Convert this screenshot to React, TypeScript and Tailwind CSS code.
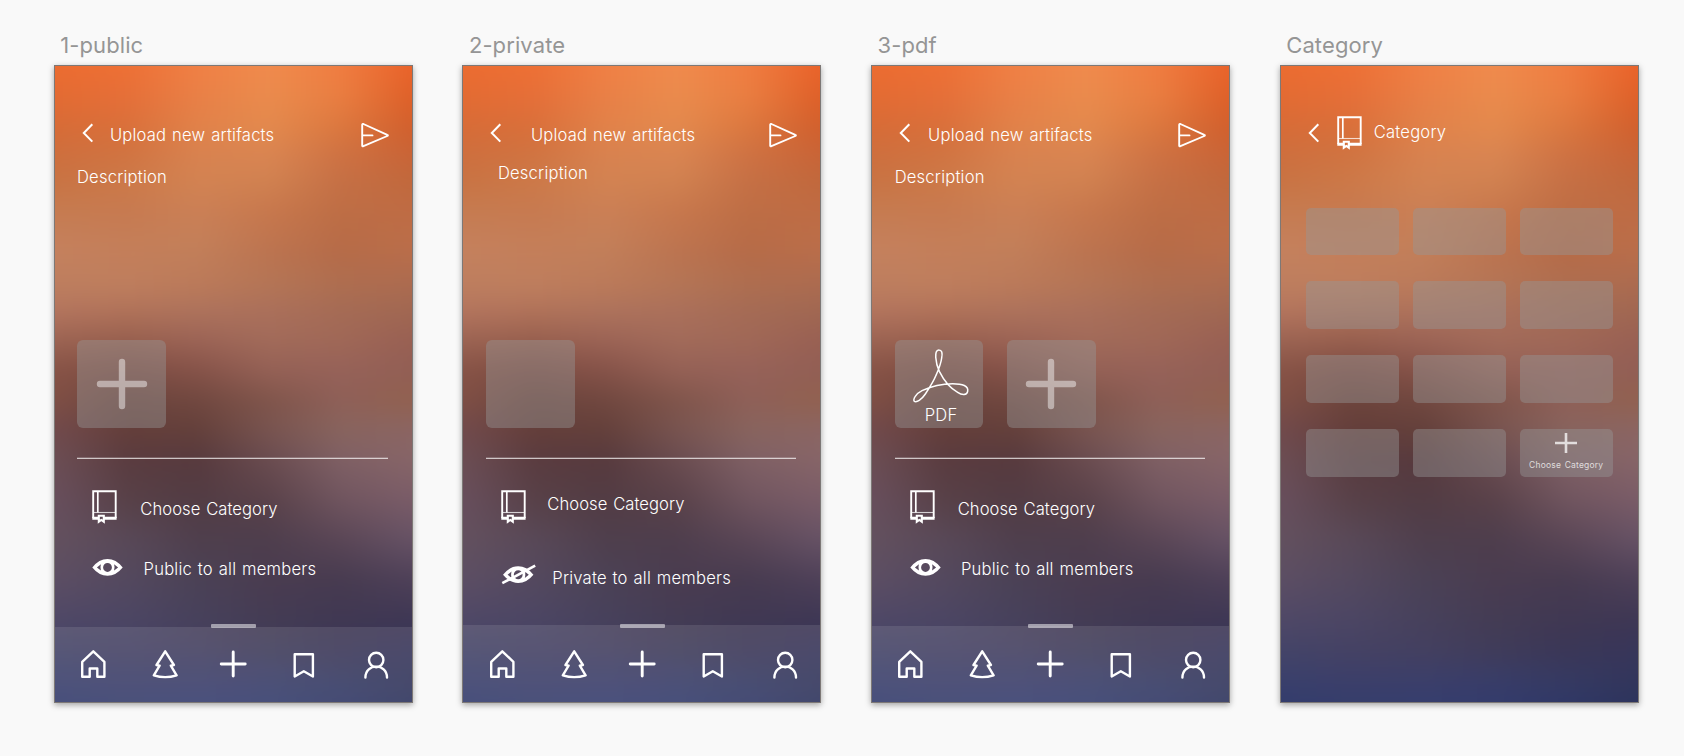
import type { CSSProperties, ReactNode } from "react";

/* Blurred wallpaper: every row is a horizontal colour ramp that fades into the one above it. */
const WALL: [number, string[]][] = [
  [0, ["#ec6c31", "#ee7035", "#f08045", "#f08b4d", "#f07d41", "#ea632a"]],
  [34, ["#e26b33", "#e46f39", "#e88047", "#e98b4d", "#e87d41", "#dd6029"]],
  [64, ["#d66c38", "#d8703b", "#e0824a", "#e2894e", "#da773f", "#d0602e"]],
  [89, ["#ce6f3e", "#d07442", "#d88250", "#d98552", "#ce7243", "#c96437"]],
  [114, ["#c97343", "#cd7948", "#d38352", "#d18251", "#c67045", "#c1683c"]],
  [144, ["#c67b50", "#c77a50", "#cb8056", "#c8784d", "#be6e45", "#bf6c44"]],
  [184, ["#c5815e", "#c47f5a", "#c27f5a", "#bc7450", "#b66b48", "#ba6e4a"]],
  [219, ["#bd7e5f", "#be7e5e", "#bb7a5a", "#b47556", "#ae6e50", "#ac6b50"]],
  [244, ["#b4755e", "#b1735a", "#ae735c", "#ab705b", "#a56b55", "#a16852"]],
  [274, ["#9c6453", "#98604f", "#9c6456", "#a26b5a", "#a06857", "#996053"]],
  [304, ["#875346", "#7e4c43", "#865349", "#956156", "#966259", "#925f55"]],
  [334, ["#7f4f45", "#6c443c", "#714840", "#80554b", "#8f6058", "#92614f"]],
  [364, ["#714a4c", "#643e3a", "#64403b", "#785450", "#88645e", "#8b6563"]],
  [394, ["#6c4e54", "#5a3c40", "#573a3e", "#6a4c50", "#7f6065", "#876568"]],
  [434, ["#684f5d", "#584148", "#523c44", "#5a424a", "#70555f", "#7a5c68"]],
  [474, ["#63515f", "#594958", "#4f3f4d", "#4e3e4d", "#5a4656", "#665265"]],
  [514, ["#5c4e64", "#54495f", "#4b4256", "#4a3c50", "#473b50", "#4e4058"]],
  [554, ["#4f4867", "#4c4664", "#47415c", "#443c54", "#403853", "#3e3754"]],
  [584, ["#444468", "#454264", "#444060", "#403c5a", "#3b3757", "#38365a"]],
  [614, ["#3b406c", "#3c3f6a", "#3c3f6a", "#393d68", "#363a62", "#33365c"]],
  [636, ["#333c6c", "#363e6c", "#363e6e", "#343c6c", "#303866", "#2d345c"]],
];
const BLEED = 24;
const STEP = 357 / 5;

function Wallpaper() {
  return (
    <div className="absolute inset-0 overflow-hidden">
      <div className="absolute -inset-[24px] blur-[9px]">
        {WALL.map(([y, colors], i) => {
          const top = i === 0 ? 0 : WALL[i - 1][0] + BLEED;
          const stops = colors.map((c, k) => `${c} ${BLEED + k * STEP}px`).join(", ");
          const style: CSSProperties = {
            top,
            backgroundImage: `linear-gradient(to right, ${stops})`,
            maskImage: i === 0 ? undefined : `linear-gradient(to bottom, transparent 0, #000 ${y + BLEED - top}px)`,
          };
          return <div key={y} className="absolute inset-x-0 bottom-0" style={style} />;
        })}
      </div>
    </div>
  );
}

function Back() {
  return (
    <svg className="mt-[57px] h-[20px] w-[12px] shrink-0" viewBox="0 0 12 20" fill="none" stroke="#fff" strokeWidth="2">
      <path d="M10.300 1.200 1.800 10l8.500 8.600" />
    </svg>
  );
}

function Send() {
  return (
    <svg className="mt-[55.5px] h-[26px] w-[30px] shrink-0" viewBox="0 0 30 26" fill="none" stroke="#fff" strokeWidth="1.9" strokeLinejoin="round" strokeLinecap="round">
      <path d="M2.200 2.800v20.600q0 1.300 1.200.8L27.300 14q1.200-.6 0-1.100L3.400 2q-1.200-.5-1.200.8ZM2.500 13.400h10" />
    </svg>
  );
}

function Book() {
  return (
    <svg className="h-[34px] w-[25px] shrink-0" viewBox="0 0 25 34" fill="none" stroke="#fff">
      <path d="M1.200 28V1.300h22.500V28" strokeWidth="1.900" />
      <path d="M5.800 1.500V22.500" strokeWidth="1.700" />
      <path d="M1 22.500h23" strokeWidth="1.100" opacity=".75" />
      <path d="M.3 28.200h6.500M11.500 28.200h13.100" strokeWidth="2.900" />
      <path d="M6.800 25.700h5v6l-2.500-1.700-2.500 1.700z" strokeWidth="2.100" />
    </svg>
  );
}

const EYE =
  "M.3 9Q7 .6 15.500 .6T30.700 9Q24 17.300 15.500 17.300T.3 9ZM11.100 9a4.400 4.500 0 1 0 8.800 0a4.400 4.500 0 1 0-8.800 0ZM8.900 5.800Q7.900 9 8.900 12.200L4.900 9ZM22.100 5.800Q23.100 9 22.100 12.200L26.100 9Z";

function Eye() {
  return (
    <svg className="h-[18px] w-[31px] shrink-0" viewBox="0 .6 31 18">
      <path d={EYE} fill="#fff" fillRule="evenodd" />
    </svg>
  );
}

function EyeOff() {
  return (
    <svg className="h-[21px] w-[35px] shrink-0" viewBox="0 0 35 21">
      <path d={EYE} fill="#fff" fillRule="evenodd" transform="translate(1.700 1.700)" />
      <path d="M1.300 19.200 34.200 1.600" stroke="#fff" strokeWidth="2.600" />
    </svg>
  );
}

function Cross() {
  return (
    <svg className="h-[52px] w-[52px]" viewBox="0 0 52 52" stroke="#fff" strokeOpacity=".45" strokeWidth="6.4" strokeLinecap="round">
      <path d="M26 4v44M4 26h44" />
    </svg>
  );
}

function Acrobat() {
  return (
    <svg className="h-[57px] w-[60px] shrink-0" viewBox="65 35 180 171" fill="none" stroke="#fff" strokeWidth="4.500" strokeLinejoin="round">
      <path d="M148 44C158 44 160 52 157 68C155 85 148 102 140 120C133 138 122 155 108 176C96 194 82 202 75 198C70 192 80 175 98 166C125 153 155 145 190 145C220 145 238 152 235 168C233 180 218 180 205 171C185 160 165 138 150 108C138 82 134 44 148 44Z" />
    </svg>
  );
}

function Tile({ children }: { children?: ReactNode }) {
  return (
    <div className="flex h-[88px] w-[88.700px] flex-col items-center justify-center rounded-[6px] bg-[#979797]/43">{children}</div>
  );
}

function NavBar({ height }: { height: string }) {
  return (
    <div className={`relative flex items-end bg-white/10 pr-[22.6px] pb-[22px] pl-[25.4px] ${height}`}>
      <div className="absolute bottom-[74px] left-[156.4px] h-[4px] w-[45px] rounded-[1px] bg-white/50" />
      <svg className="h-[32px] w-full" viewBox="0 0 309 32" fill="none" stroke="#fff" strokeWidth="2.4" strokeLinejoin="round" strokeLinecap="round">
        <path d="M2.200 13.800 13.300 3.300l11.100 10.500v14.900h-7.100v-8.200H9.700v8.200H2.200Z" />
        <path d="M85.200 3.300 93.900 17l-3.100.6 5.800 9.700q-11.400 3.600-22.800 0l5.800-9.700-3.100-.6Z" />
        <path d="M153.200 4v24M141.200 16h24" strokeWidth="2.900" />
        <path d="M214.700 6.200h18.200v22.300l-9.100-5.200-9.100 5.200Z" />
        <circle cx="296.200" cy="12" r="7.200" />
        <path d="M285.400 29.500c0-14.500 21.600-14.500 21.600 0" />
      </svg>
    </div>
  );
}

const FONT = "font-['Inter','Noto_Sans',sans-serif]";

function Artboard({ label, children }: { label: string; children: ReactNode }) {
  return (
    <section className="w-[359px] shrink-0">
      <h2 className="h-[35px] pl-[6.500px] text-[22px] leading-[30px] tracking-[0.100px] whitespace-nowrap text-[#959595]">{label}</h2>
      <div className="relative h-[638px] border border-[#7d7876] shadow-[0_2px_6px_rgba(0,0,0,0.35)]">
        <Wallpaper />
        <div className="relative flex h-full flex-col text-[16.600px] leading-[20px] font-light tracking-[0.200px] [word-spacing:1px] whitespace-nowrap text-white">
          {children}
        </div>
      </div>
    </section>
  );
}

type UploadProps = {
  label: string;
  title: string;
  description: string;
  tiles: ReactNode;
  category: string;
  visibility: ReactNode;
  nav: string;
};

function Upload({ label, title, description, tiles, category, visibility, nav }: UploadProps) {
  return (
    <Artboard label={label}>
      <div className="flex h-[96px] items-start pl-[27px]">
        <Back />
        <span className={`mt-[59px] flex-1 ${title}`}>Upload new artifacts</span>
        <div className="pr-[22px]">
          <Send />
        </div>
      </div>
      <p className={`h-[178px] ${description}`}>Description</p>
      <div className="flex h-[88px] gap-[23.800px] pl-[22.600px]">{tiles}</div>
      <div className="mt-[29px] mr-[24px] ml-[22.600px] h-[2px] border-t border-white/20 bg-white/70 bg-clip-padding" />
      <div className="mt-[31px] flex h-[69px] items-start pl-[37.600px]">
        <Book />
        <span className={`tracking-[0.070px] ${category}`}>Choose Category</span>
      </div>
      <div className="flex flex-1 items-start pl-[37.600px]">{visibility}</div>
      <NavBar height={nav} />
    </Artboard>
  );
}

function Category() {
  return (
    <Artboard label="Category">
      <div className="flex h-[141.600px] items-start pl-[27px]">
        <Back />
        <div className="mt-[50px] ml-[17px]">
          <Book />
        </div>
        <span className="mt-[56px] ml-[12px]">Category</span>
      </div>
      <div className="grid grid-cols-[93.300px_93.300px_93.300px] gap-x-[13.500px] gap-y-[26.200px] pl-[25.200px]">
        {Array.from({ length: 11 }, (_, i) => (
          <div key={i} className="h-[47.600px] rounded-[5px] bg-[#979797]/43" />
        ))}
        <div className="flex h-[47.600px] flex-col items-center rounded-[5px] bg-[#979797]/43 text-white/75">
          <svg className="mt-[3px] h-[22px] w-[22px]" viewBox="0 0 22 22" stroke="currentColor" strokeWidth="2.600">
            <path d="M11 1v20M0 11h22" />
          </svg>
          <span className="mt-[5px] text-[8.500px] leading-[12px] font-normal tracking-[0.200px]">Choose Category</span>
        </div>
      </div>
    </Artboard>
  );
}

export default function App() {
  return (
    <main className={`flex h-[756px] w-[1684px] gap-[49.700px] overflow-hidden bg-[#f9f9f9] pt-[30px] pl-[53.700px] ${FONT}`}>
      <Upload
        label="1-public"
        title="ml-[16.200px]"
        description="pl-[22.300px] pt-[5px]"
        tiles={<Tile><Cross /></Tile>}
        category="ml-[23px] mt-[8.500px]"
        visibility={<><Eye /><span className="mt-[-0.500px] ml-[20.300px]">Public to all members</span></>}
        nav="h-[75px]"
      />
      <Upload
        label="2-private"
        title="ml-[28.500px]"
        description="pl-[34.500px] pt-[1px]"
        tiles={<Tile />}
        category="ml-[21.300px] mt-[3.500px]"
        visibility={<><div className="mt-[5px]"><EyeOff /></div><span className="mt-[8.500px] ml-[16.300px]">Private to all members</span></>}
        nav="h-[77px]"
      />
      <Upload
        label="3-pdf"
        title="ml-[17px]"
        description="pl-[22.600px] pt-[5px]"
        tiles={
          <>
            <Tile>
              <div className="flex h-full flex-col items-center pt-[7px] pl-[4px]">
                <Acrobat />
                <span className="mt-[1px]">PDF</span>
              </div>
            </Tile>
            <Tile><Cross /></Tile>
          </>
        }
        category="ml-[23px] mt-[8.500px]"
        visibility={<><Eye /><span className="mt-[-0.500px] ml-[20.300px]">Public to all members</span></>}
        nav="h-[76px]"
      />
      <Category />
    </main>
  );
}
